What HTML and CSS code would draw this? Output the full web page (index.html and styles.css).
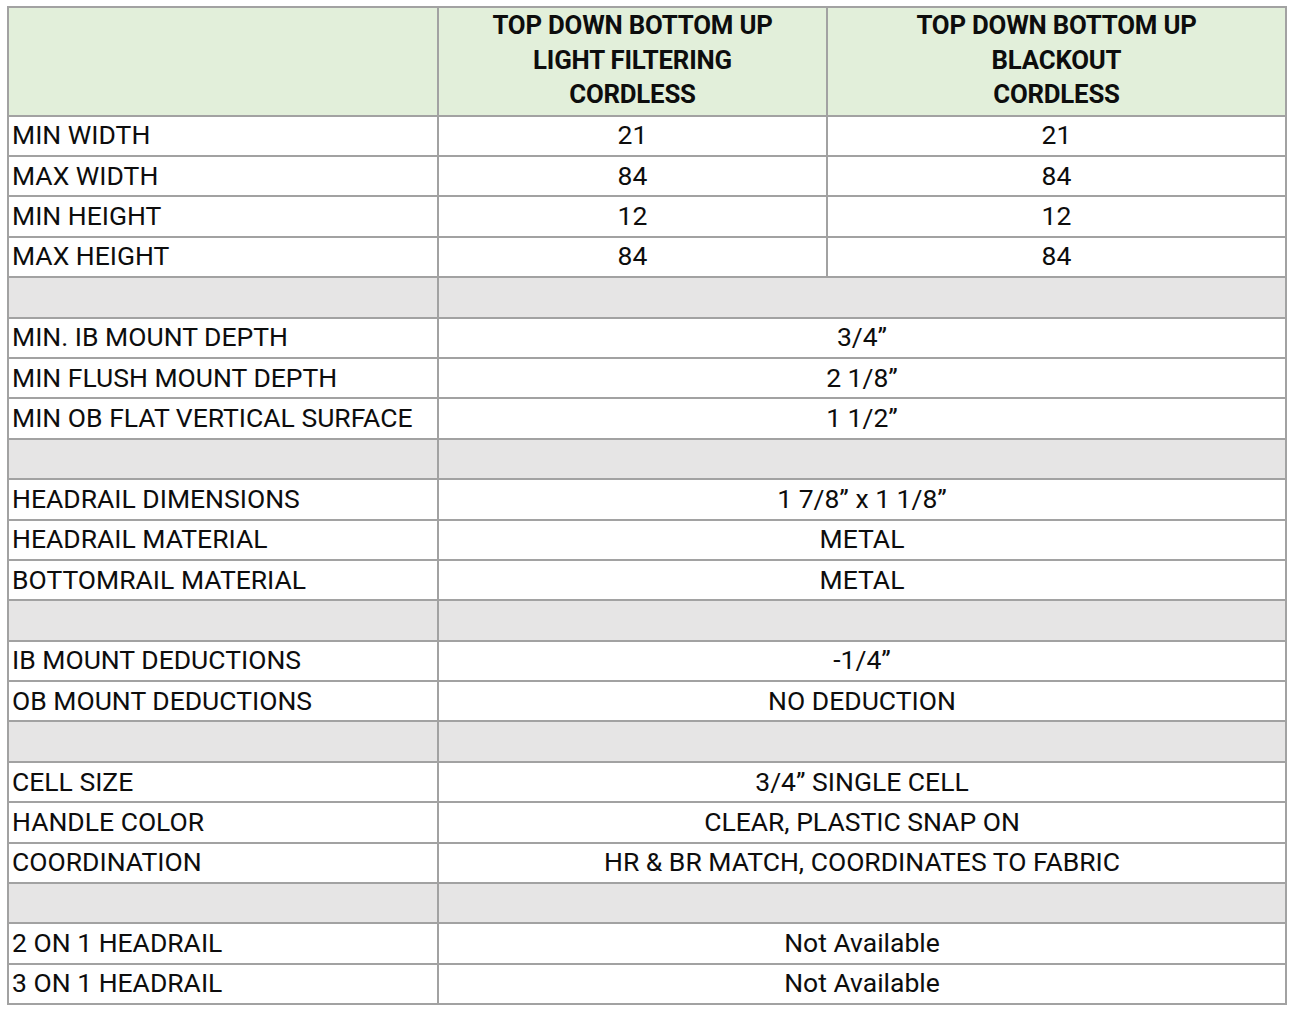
FILE: index.html
```html
<!DOCTYPE html>
<html>
<head>
<meta charset="utf-8">
<link rel="stylesheet" href="styles.css">
</head>
<body>
<table class="spec">
  <colgroup>
    <col class="c1"><col class="c2"><col class="c3">
  </colgroup>
  <thead>
    <tr class="head">
      <th></th>
      <th>TOP DOWN BOTTOM UP<br>LIGHT FILTERING<br>CORDLESS</th>
      <th>TOP DOWN BOTTOM UP<br>BLACKOUT<br>CORDLESS</th>
    </tr>
  </thead>
  <tbody>
    <tr><td>MIN WIDTH</td><td class="v">21</td><td class="v">21</td></tr>
    <tr><td>MAX WIDTH</td><td class="v">84</td><td class="v">84</td></tr>
    <tr><td>MIN HEIGHT</td><td class="v">12</td><td class="v">12</td></tr>
    <tr><td>MAX HEIGHT</td><td class="v">84</td><td class="v">84</td></tr>
    <tr class="sep"><td></td><td colspan="2"></td></tr>
    <tr><td>MIN. IB MOUNT DEPTH</td><td class="v" colspan="2">3/4”</td></tr>
    <tr><td>MIN FLUSH MOUNT DEPTH</td><td class="v" colspan="2">2 1/8”</td></tr>
    <tr><td>MIN OB FLAT VERTICAL SURFACE</td><td class="v" colspan="2">1 1/2”</td></tr>
    <tr class="sep"><td></td><td colspan="2"></td></tr>
    <tr><td>HEADRAIL DIMENSIONS</td><td class="v" colspan="2">1 7/8” x 1 1/8”</td></tr>
    <tr><td>HEADRAIL MATERIAL</td><td class="v" colspan="2">METAL</td></tr>
    <tr><td>BOTTOMRAIL MATERIAL</td><td class="v" colspan="2">METAL</td></tr>
    <tr class="sep"><td></td><td colspan="2"></td></tr>
    <tr><td>IB MOUNT DEDUCTIONS</td><td class="v" colspan="2">-1/4”</td></tr>
    <tr><td>OB MOUNT DEDUCTIONS</td><td class="v" colspan="2">NO DEDUCTION</td></tr>
    <tr class="sep"><td></td><td colspan="2"></td></tr>
    <tr><td>CELL SIZE</td><td class="v" colspan="2">3/4” SINGLE CELL</td></tr>
    <tr><td>HANDLE COLOR</td><td class="v" colspan="2">CLEAR, PLASTIC SNAP ON</td></tr>
    <tr><td>COORDINATION</td><td class="v" colspan="2">HR &amp; BR MATCH, COORDINATES TO FABRIC</td></tr>
    <tr class="sep"><td></td><td colspan="2"></td></tr>
    <tr><td>2 ON 1 HEADRAIL</td><td class="v" colspan="2">Not Available</td></tr>
    <tr><td>3 ON 1 HEADRAIL</td><td class="v" colspan="2">Not Available</td></tr>
  </tbody>
</table>
</body>
</html>
```
FILE: styles.css
```css
html, body {
  margin: 0;
  padding: 0;
  background: #ffffff;
}
body {
  padding: 6px 0 0 7px;
  font-family: Roboto, "Liberation Sans", sans-serif;
  color: #0d0d0d;
}
.spec {
  border-collapse: collapse;
  table-layout: fixed;
  width: 1278px;
}
.c1 { width: 430px; }
.c2 { width: 389px; }
.c3 { width: 459px; }
.spec th, .spec td {
  border: 2px solid #a2a2a2;
  padding: 0 0 1px 3px;
  height: 37.4px;
  font-size: 26.5px;
  line-height: 36px;
  text-align: left;
  white-space: nowrap;
  overflow: hidden;
}
.spec .head th {
  background: #e2efda;
  height: 103.6px;
  padding: 0 0 3px 0;
  font-size: 25.8px;
  font-weight: 700;
  line-height: 34.5px;
  text-align: center;
  letter-spacing: -0.2px;
}
.spec td.v {
  text-align: center;
  padding: 0 0 1px 0;
}
.spec .sep td {
  background: #e6e5e5;
}
```
